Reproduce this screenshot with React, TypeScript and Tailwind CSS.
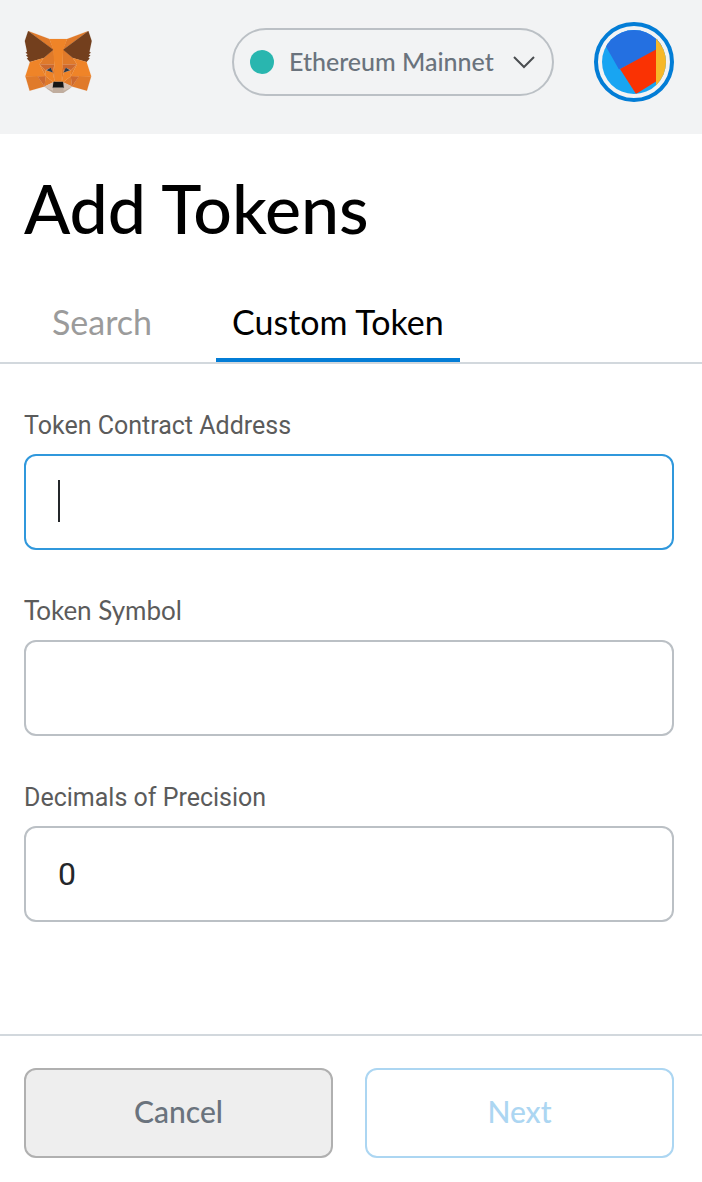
import { useState } from "react";

const FOX: [string, string][] = [
  ["#E07A2A", "274.1,35.5 174.6,109.4 193,65.8"],
  ["#E07A2A", "44.4,35.5 143.1,110.1 125.6,65.8"],
  ["#E07A2A", "238.3,206.8 211.8,247.4 268.5,263 284.8,207.7"],
  ["#E07A2A", "33.9,207.7 50.1,263 106.8,247.4 80.3,206.8"],
  ["#E07A2A", "103.6,138.2 87.8,162.1 144.1,164.6 142.1,104.1"],
  ["#E07A2A", "214.9,138.2 175.9,103.4 174.6,164.6 230.8,162.1"],
  ["#E07A2A", "106.8,247.4 140.6,230.9 111.4,208.1"],
  ["#E07A2A", "177.9,230.9 211.8,247.4 207.1,208.1"],
  ["#D7C1B3", "211.8,247.4 177.9,230.9 180.6,253 180.3,262.3"],
  ["#D7C1B3", "106.8,247.4 138.3,262.3 138.1,253 140.6,230.9"],
  ["#CD692E", "106.8,247.4 111.6,206.8 80.3,207.7"],
  ["#CD692E", "207,206.8 211.8,247.4 238.3,207.7"],
  ["#CD692E", "230.8,162.1 174.6,164.6 179.8,193.5 188.1,176.1 208.1,185.2"],
  ["#CD692E", "110.6,185.2 130.6,176.1 138.8,193.5 144.1,164.6 87.8,162.1"],
  ["#E07A2A", "87.8,162.1 111.4,208.1 110.6,185.2"],
  ["#E07A2A", "208.1,185.2 207.1,208.1 230.8,162.1"],
  ["#E07A2A", "144.1,164.6 138.8,193.5 145.4,227.6 146.9,182.7"],
  ["#E07A2A", "174.6,164.6 171.9,182.6 173.1,227.6 179.8,193.5"],
  ["#EF8428", "179.8,193.5 173.1,227.6 177.9,230.9 207.1,208.1 208.1,185.2"],
  ["#EF8428", "110.6,185.2 111.4,208.1 140.6,230.9 145.4,227.6 138.8,193.5"],
  ["#2C3847", "138.8,193.5 114,185.2 130.5,176.1"],
  ["#2C3847", "179.7,193.5 188,176.1 204.5,185.2"],
  ["#C0AD9E", "180.3,262.3 180.6,253 178.1,250.8 140.4,250.8 138.1,253 138.3,262.3 106.8,247.4 117.8,256.4 140.1,271.9 178.4,271.9 200.8,256.4 211.8,247.4"],
  ["#161616", "177.9,230.9 173.1,227.6 145.4,227.6 140.6,230.9 138.1,253 140.4,250.8 178.1,250.8 180.6,253"],
  ["#733F1D", "278.3,114.2 286.8,73.4 274.1,35.5 177.9,106.9 214.9,138.2 267.2,153.5 278.8,140 273.8,136.4 281.8,129.1 275.6,124.3 283.6,118.2"],
  ["#733F1D", "31.8,73.4 40.3,114.2 34.9,118.2 42.9,124.3 36.8,129.1 44.8,136.4 39.8,140 51.3,153.5 103.6,138.2 140.6,106.9 44.4,35.5"],
  ["#EF8428", "267.2,153.5 214.9,138.2 230.8,162.1 207.1,208.1 238.3,207.7 284.8,207.7"],
  ["#EF8428", "103.6,138.2 51.3,153.5 33.9,207.7 80.3,207.7 111.4,208.1 87.8,162.1"],
  ["#EF8428", "174.6,164.6 177.9,106.9 193.1,65.8 125.6,65.8 140.6,106.9 144.1,164.6 145.3,182.8 145.4,227.6 173.1,227.6 173.3,182.8"],
];

function Fox() {
  return (
    <svg viewBox="28.8 35.5 259 236.4" className="h-[62px] w-[68px]" aria-hidden="true">
      {FOX.map(([fill, points]) => (
        <polygon key={points} points={points} fill={fill} stroke={fill} strokeWidth="0.5" strokeLinejoin="round" />
      ))}
    </svg>
  );
}

function Avatar() {
  return (
    <svg viewBox="0 0 64 64" className="size-16" aria-hidden="true">
      <clipPath id="disc">
        <circle cx="32" cy="32" r="32" />
      </clipPath>
      <g clipPath="url(#disc)">
        <rect width="64" height="64" fill="#18A5F2" />
        <path d="M-2 6L17 39.500L66 14V-2H-2Z" fill="#2470E1" />
        <path d="M18 39L54 19.500V51.500L34 64Z" fill="#FA3203" />
        <rect x="54" width="10" height="64" fill="#F6B828" />
      </g>
    </svg>
  );
}

const inputBase =
  "block h-24 w-full rounded-xl border-2 bg-white px-8 font-['Roboto',sans-serif] text-[32px] text-[#24272a] outline-none";

export default function App() {
  const [address, setAddress] = useState("");
  const [symbol, setSymbol] = useState("");
  const [decimals, setDecimals] = useState("0");

  return (
    <div className="flex min-h-screen flex-col bg-white font-['Lato',sans-serif]">
      <header className="flex h-[134px] items-start bg-[#f2f3f4] pt-[22px] pr-7 pl-6">
        <a href="#home" aria-label="MetaMask" className="mt-[9px]">
          <Fox />
        </a>
        <button
          type="button"
          className="mt-[6px] mr-10 ml-auto flex h-[68px] w-[322px] items-center rounded-full border-2 border-[#bbc0c5] px-4"
        >
          <span className="size-6 rounded-full bg-[#29b6af]" />
          <span className="ml-[15px] flex-1 pb-[2px] text-left text-[25px] leading-8 font-medium whitespace-nowrap text-[#6a737d]">
            Ethereum Mainnet
          </span>
          <svg viewBox="0 0 24 14" className="h-[14px] w-6" fill="none" stroke="#4a4d50" strokeWidth="2" aria-hidden="true">
            <path d="M2 2L12 12L22 2" />
          </svg>
        </button>
        <button
          type="button"
          aria-label="Account"
          className="flex size-20 items-center justify-center rounded-full border-4 border-[#037dd6]"
        >
          <Avatar />
        </button>
      </header>

      <main className="flex flex-1 flex-col">
        <h1 className="px-6 pt-[34px] text-[68px] leading-20 font-medium text-black">Add Tokens</h1>

        <nav className="mt-[34px] flex border-b-2 border-[#d2d8dd] px-4" role="tablist">
          <button
            type="button"
            role="tab"
            aria-selected="false"
            className="h-20 border-b-4 border-transparent px-9 pt-1 text-[34px] leading-10 text-[#9b9b9b]"
          >
            Search
          </button>
          <button
            type="button"
            role="tab"
            aria-selected="true"
            className="ml-7 h-20 border-b-4 border-[#037dd6] px-4 pt-1 text-[34px] leading-10 text-black"
          >
            Custom Token
          </button>
        </nav>

        <form className="flex flex-1 flex-col pt-11">
          <div className="flex flex-col gap-11 pr-7 pl-6">
            <div>
              <label htmlFor="address" className="block pb-[10px] font-['Roboto',sans-serif] text-[25px] leading-9 text-[#5b5b5b]">
                Token Contract Address
              </label>
              <div className="relative">
                <input
                  id="address"
                  value={address}
                  onChange={(e) => setAddress(e.target.value)}
                  className={`${inputBase} border-[#3098dc] caret-transparent`}
                />
                <span className="absolute top-[26px] left-[34px] h-[42px] w-[2px] bg-[#24272a]" />
              </div>
            </div>
            <div>
              <label htmlFor="symbol" className="block pb-[14px] text-[26px] leading-8 text-[#5b5b5b]">
                Token Symbol
              </label>
              <input
                id="symbol"
                value={symbol}
                onChange={(e) => setSymbol(e.target.value)}
                className={`${inputBase} border-[#bbc0c5]`}
              />
            </div>
            <div>
              <label htmlFor="decimals" className="block pb-[10px] font-['Roboto',sans-serif] text-[25px] leading-9 text-[#5b5b5b]">
                Decimals of Precision
              </label>
              <input
                id="decimals"
                value={decimals}
                onChange={(e) => setDecimals(e.target.value)}
                className={`${inputBase} border-[#bbc0c5]`}
              />
            </div>
          </div>

          <footer className="mt-auto flex gap-8 border-t-2 border-[#d2d8dd] pt-8 pr-7 pb-6 pl-6">
            <button
              type="button"
              className="h-[90px] flex-1 rounded-xl border-2 border-[#b0b0b0] bg-[#eeeeee] pb-1 text-[30px] font-medium text-[#6a737d]"
            >
              Cancel
            </button>
            <button
              type="button"
              disabled
              className="h-[90px] flex-1 rounded-xl border-2 border-[#acd6f2] bg-white pb-1 text-[30px] font-medium text-[#acd6f2]"
            >
              Next
            </button>
          </footer>
        </form>
      </main>
    </div>
  );
}
